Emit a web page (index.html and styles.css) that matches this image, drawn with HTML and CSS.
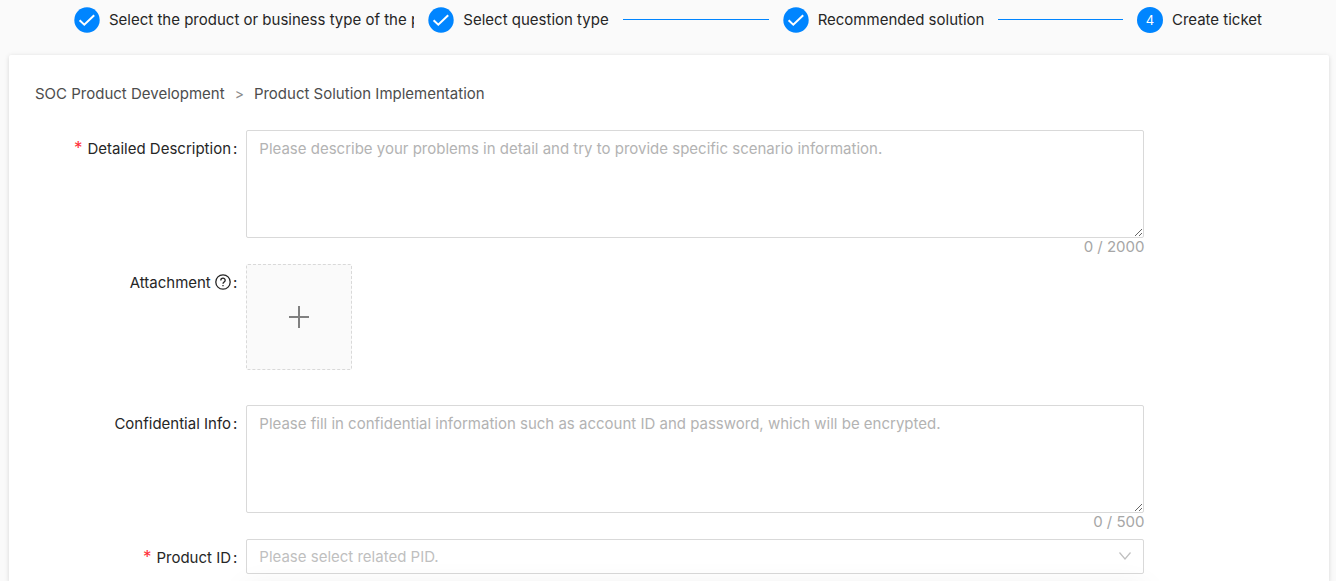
FILE: index.html
```html
<!DOCTYPE html>
<html lang="en">

<head>
    <meta charset="UTF-8">
    <meta name="viewport" content="width=device-width, initial-scale=1.0">
    <title>Create ticket</title>
    <link rel="stylesheet" href="styles.css">
</head>

<body>
    <!-- Steps -->
    <ol class="steps">
        <li class="step">
            <svg class="step-icon" viewBox="0 0 26 26" aria-hidden="true">
                <circle cx="13" cy="13" r="12.7" />
                <path d="M5.6 13.2 L10.3 17.7 L20.2 8.2" />
            </svg>
            <span class="step-title">Select the product or business type of the problem</span>
        </li>
        <li class="step">
            <svg class="step-icon" viewBox="0 0 26 26" aria-hidden="true">
                <circle cx="13" cy="13" r="12.7" />
                <path d="M5.6 13.2 L10.3 17.7 L20.2 8.2" />
            </svg>
            <span class="step-title">Select question type</span>
        </li>
        <li class="step">
            <svg class="step-icon" viewBox="0 0 26 26" aria-hidden="true">
                <circle cx="13" cy="13" r="12.7" />
                <path d="M5.6 13.2 L10.3 17.7 L20.2 8.2" />
            </svg>
            <span class="step-title">Recommended solution</span>
        </li>
        <li class="step">
            <span class="step-number">4</span>
            <span class="step-title">Create ticket</span>
        </li>
    </ol>

    <main class="card">
        <div class="breadcrumb">
            <span>SOC Product Development</span>
            <span class="separator">&gt;</span>
            <span>Product Solution Implementation</span>
        </div>

        <!-- Ticket Form -->
        <form class="ticket-form">
            <div class="form-row">
                <label class="required" for="description">Detailed Description<span class="colon">:</span></label>
                <div class="control">
                    <textarea id="description" name="description" placeholder="Please describe your problems in detail and try to provide specific scenario information."></textarea>
                    <div class="count">0 / 2000</div>
                </div>
            </div>

            <div class="form-row attachment-row">
                <label for="attachment">Attachment
                    <svg class="help-icon" viewBox="0 0 16 16" aria-hidden="true">
                        <circle cx="8" cy="8" r="7.2" />
                        <path d="M5.8 6.4 C5.8 3.5 10.2 3.5 10.2 6.3 C10.2 8 8 8 8 9.8" />
                        <path d="M8 11.1 V12.3" />
                    </svg><span class="colon">:</span>
                </label>
                <div class="control">
                    <button class="upload" id="attachment" type="button" aria-label="Upload attachment">
                        <svg viewBox="0 0 22 22" aria-hidden="true">
                            <path d="M11 0 V22 M1 11 H21" />
                        </svg>
                    </button>
                </div>
            </div>

            <div class="form-row">
                <label for="confidential">Confidential Info<span class="colon">:</span></label>
                <div class="control">
                    <textarea id="confidential" name="confidential" placeholder="Please fill in confidential information such as account ID and password, which will be encrypted."></textarea>
                    <div class="count">0 / 500</div>
                </div>
            </div>

            <div class="form-row">
                <label class="required" for="product-id">Product ID<span class="colon">:</span></label>
                <div class="control select-box">
                    <select id="product-id" name="product-id" required>
                        <option value="">Please select related PID.</option>
                    </select>
                    <svg class="arrow" viewBox="0 0 12 8" aria-hidden="true">
                        <path d="M0.5 0.5 L6 7 L11.5 0.5" />
                    </svg>
                    <div class="dropdown"></div>
                </div>
            </div>
        </form>
    </main>
</body>

</html>
```

FILE: styles.css
```css
/* General Styling */
* {
    box-sizing: border-box;
}

body {
    display: flex;
    flex-direction: column;
    height: 100vh;
    margin: 0;
    overflow: hidden;
    background-color: #fafafa;
    color: #262626;
    font-family: Inter, "Liberation Sans", sans-serif;
    font-size: 15px;
    line-height: 24px;
}

/* Steps */
.steps {
    display: flex;
    margin: 0;
    padding: 6px 74px 22px;
    list-style: none;
}

.step {
    display: flex;
    flex: 1;
    align-items: center;
    gap: 9px;
    height: 27px;
    margin-right: 14px;
    overflow: hidden;
    white-space: nowrap;
}

.step:last-child {
    flex: none;
    margin-right: 0;
}

.step:not(:last-child)::after {
    content: "";
    flex: 1;
    height: 1px;
    margin-left: 5px;
    background-color: #0085ff;
}

.step-icon,
.step-number {
    flex: none;
    width: 26px;
    height: 26px;
}

.step-icon circle {
    fill: #0085ff;
}

.step-icon path {
    fill: none;
    stroke: #fff;
    stroke-width: 2;
}

.step-number {
    border-radius: 50%;
    background-color: #0085ff;
    color: #fff;
    font-size: 13px;
    line-height: 26px;
    text-align: center;
}

.step-title {
    flex: none;
}

/* Card */
.card {
    flex: 1;
    margin: 0 7px 0 9px;
    padding: 27px 26px 0;
    border-radius: 2px 2px 0 0;
    background-color: #fff;
    box-shadow: 0 1px 5px rgba(0, 0, 0, 0.14);
}

.breadcrumb {
    display: flex;
    gap: 10px;
    margin-bottom: 24px;
    color: #4d4d4d;
}

.separator {
    color: #8c8c8c;
    font-size: 14px;
}

/* Ticket Form */
.form-row {
    display: grid;
    grid-template-columns: 4fr 17fr 3fr;
    margin-bottom: 8px;
}

.attachment-row {
    margin-bottom: 35px;
}

label {
    padding: 7px 9px 0 0;
    text-align: right;
}

.required::before {
    content: "*";
    margin-right: 5px;
    color: #ff2d37;
    font-size: 17px;
    line-height: 20px;
}

.colon {
    margin-left: 2px;
}

.help-icon {
    width: 16px;
    height: 16px;
    vertical-align: -2px;
    fill: none;
    stroke: #262626;
    stroke-width: 1.3;
}

textarea,
select {
    display: block;
    width: 100%;
    border: 1px solid #d9d9d9;
    border-radius: 2px;
    background-color: #fff;
    font: inherit;
}

textarea {
    height: 108px;
    padding: 6px 12px;
    resize: vertical;
}

textarea::placeholder {
    color: #b3b3b3;
}

.count {
    height: 18px;
    color: #a6a6a6;
    line-height: 18px;
    text-align: right;
}

.upload {
    display: flex;
    align-items: center;
    justify-content: center;
    width: 106px;
    height: 106px;
    border: 1px dashed #d9d9d9;
    border-radius: 2px;
    background-color: #fafafa;
    cursor: pointer;
}

.upload svg {
    width: 22px;
    height: 22px;
    stroke: #808080;
    stroke-width: 2;
}

.select-box {
    position: relative;
}

select {
    height: 35px;
    padding: 0 12px;
    appearance: none;
    color: #bfbfbf;
}

.arrow {
    position: absolute;
    top: 13px;
    right: 13px;
    width: 12px;
    height: 8px;
    fill: none;
    stroke: #bfbfbf;
    stroke-width: 1.2;
    pointer-events: none;
}

/* Menu opens below the select */
.dropdown {
    position: absolute;
    top: 43px;
    left: 0;
    width: 100%;
    height: 200px;
    background-color: #fff;
    box-shadow: 0 6px 28px rgba(0, 0, 0, 0.08);
}
```
